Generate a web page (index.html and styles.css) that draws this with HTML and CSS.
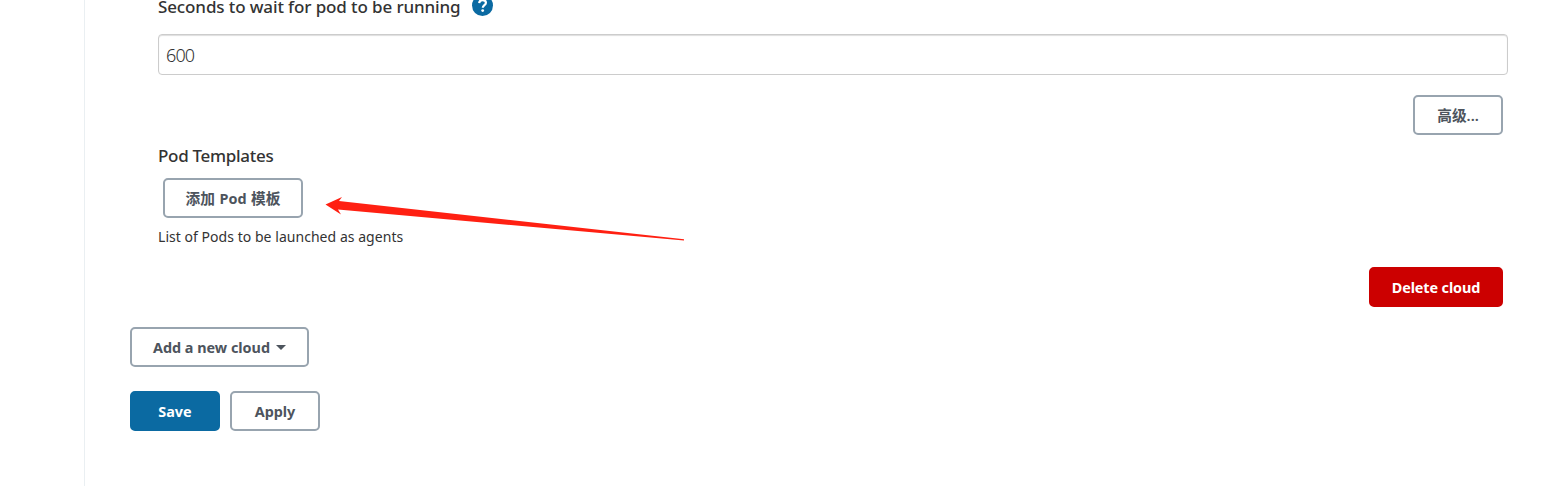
FILE: index.html
```html
<!DOCTYPE html>
<html lang="zh-CN">
<head>
<meta charset="utf-8">
<title>Configure Clouds</title>
<link rel="stylesheet" href="styles.css">
</head>
<body>
<main class="panel">
  <section class="cloud">
    <div class="label wait-label"><span class="t-wait">Seconds to wait for pod to be running</span>
      <svg class="help" viewBox="0 0 22 22"><circle cx="11" cy="11" r="11" fill="#0b6aa2"/><path d="M7.500 8.600C7.700 6.500 9.100 5.300 11.100 5.300c2.100 0 3.500 1.200 3.500 2.900 0 2.400-3.300 2.600-3.300 5.100" fill="none" stroke="#fff" stroke-width="2.300"/><circle cx="11.200" cy="16.300" r="1.500" fill="#fff"/></svg>
    </div>
    <input class="field" type="text" value="600">
    <div class="row-end"><button class="btn advanced"><span class="zh">高级...</span></button></div>
    <div class="label pod-label"><span class="t-pod">Pod Templates</span></div>
    <button class="btn add-pod"><span class="zh">添加</span><span>Pod</span><span class="zh">模板</span></button>
    <p class="desc">List of Pods to be launched as agents</p>
    <div class="row-end delete-row"><button class="btn danger">Delete cloud</button></div>
  </section>
  <button class="btn add-cloud">Add a new cloud <span class="caret"></span></button>
  <div class="actions"><button class="btn primary">Save</button><button class="btn apply">Apply</button></div>
</main>
<svg class="arrow" viewBox="0 0 370 60"><path d="M5.500 24.500L22 17 19 21 364 59.300 364 60.500 18 29.500 21 34.500Z" fill="#ff2012"/></svg>
</body>
</html>
```
FILE: styles.css
```css
* { box-sizing: border-box; }
body { margin: 0; height: 486px; overflow: hidden; background: #fff; color: #333; font-family: "Noto Sans", "Noto Sans CJK SC", sans-serif; }
.panel { margin-left: 84px; height: 486px; border-left: 1px solid #eaeff2; padding: 0 41px 0 45px; }
.cloud { display: flow-root; padding-left: 28px; }
.label { display: flex; height: 24px; font-size: 17px; line-height: 24px; font-weight: 500; white-space: nowrap; }
.wait-label { height: 19px; line-height: 13px; gap: 11px; }
.t-wait { letter-spacing: -0.12px; }
.t-pod { letter-spacing: -0.3px; }
.help { width: 21px; height: 21px; margin-top: -5px; }
.field { display: block; width: 1350px; height: 41px; margin-top: 15px; padding: 0 8px 0 7px; border: 1px solid #ccc; border-radius: 4px; font: 350 18px "Noto Sans", "Open Sans", sans-serif; letter-spacing: -0.9px; color: #333; box-shadow: inset 0 1px 1px #0002; }
.row-end { display: flex; justify-content: flex-end; padding: 20px 5px 0 0; }
.delete-row { padding-top: 19px; }
.btn { display: flex; align-items: center; justify-content: center; height: 40px; padding: 0; border: 2px solid #98a4af; border-radius: 5px; background: #fff; color: #4d545d; font: 700 14.4px "Noto Sans", "Noto Sans CJK SC", sans-serif; white-space: nowrap; }
.zh { padding-bottom: 2px; font-size: 14.7px; font-weight: 600; }
.advanced { width: 90px; }
.pod-label { margin-top: 8px; line-height: 26px; }
.add-pod { width: 140px; margin: 11px 0 0 5px; gap: 4.500px; }
.desc { margin: 8px 0 0; height: 22px; font-size: 14px; line-height: 22px; letter-spacing: 0.04px; }
.danger { width: 134px; background: #c00; border-color: #c00; color: #fff; letter-spacing: -0.1px; }
.add-cloud { width: 179px; margin-top: 20px; gap: 6px; }
.caret { border: 5.500px solid transparent; border-top-color: #4d545d; border-bottom: 0; }
.actions { display: flex; gap: 10px; margin-top: 24px; }
.actions .btn { width: 90px; }
.actions .primary { background: #0b6aa2; border-color: #0b6aa2; color: #fff; }
.arrow { position: absolute; left: 320px; top: 180px; width: 370px; height: 60px; overflow: visible; }
```
